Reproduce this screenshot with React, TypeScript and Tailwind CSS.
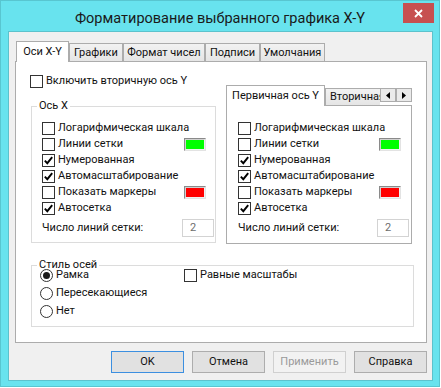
import React from 'react';

const FONT = { fontFamily: 'Roboto, "Noto Sans", sans-serif' };

function Box({ checked }: { checked?: boolean }) {
  return (
    <span className="w-[13px] h-[13px] shrink-0 border border-[#333333] bg-white flex items-center justify-center">
      {checked && (
        <svg width="11" height="11" viewBox="0 0 11 11">
          <path d="M1.8 5.6 L4.3 8.2 L9.2 2.2" fill="none" stroke="#000" strokeWidth="1.9" />
        </svg>
      )}
    </span>
  );
}

function Radio({ checked }: { checked?: boolean }) {
  return (
    <span className="w-[13px] h-[13px] shrink-0 rounded-full border border-[#333333] bg-white flex items-center justify-center">
      {checked && <span className="w-[7px] h-[7px] rounded-full bg-[#1a1a1a]" />}
    </span>
  );
}

function Swatch({ color }: { color: string }) {
  return (
    <span className="w-[22px] h-[13px] shrink-0 border border-t-[#8a8a8a] border-l-[#8a8a8a] border-r-[#e3e3e3] border-b-[#e3e3e3] flex">
      <span className="flex-1 border border-t-[#d0d0d0] border-l-[#d0d0d0] border-r-[#f0f0f0] border-b-[#f0f0f0]" style={{ background: color }} />
    </span>
  );
}

type Row = { label: string; checked?: boolean; swatch?: string };

const ROWS: Row[] = [
  { label: 'Логарифмическая шкала' },
  { label: 'Линии сетки', swatch: '#00ff00' },
  { label: 'Нумерованная', checked: true },
  { label: 'Автомасштабирование', checked: true },
  { label: 'Показать маркеры', swatch: '#ff0000' },
  { label: 'Автосетка', checked: true },
];

function AxisRows({ swatchGap, inputGap, pl }: { swatchGap: string; inputGap: string; pl: string }) {
  return (
    <div className={pl}>
      {ROWS.map(r => (
        <div key={r.label} className="h-[16px] flex items-center">
          <Box checked={r.checked} />
          <span className="ml-[3px] flex-1 whitespace-nowrap">{r.label}</span>
          {r.swatch && <span className={swatchGap}><Swatch color={r.swatch} /></span>}
        </div>
      ))}
      <div className="mt-[3px] h-[18px] flex items-center">
        <span className="flex-1 whitespace-nowrap">Число линий сетки:</span>
        <span className={`w-[32px] h-[18px] border border-[#d3d3d3] bg-white text-[#6d6d6d] pl-[7px] flex items-center ${inputGap}`}>2</span>
      </div>
    </div>
  );
}

export default function App() {
  const tabs = [
    { label: 'Графики', w: 'w-[54px]' },
    { label: 'Формат чисел', w: 'w-[82px]' },
    { label: 'Подписи', w: 'w-[55px]' },
    { label: 'Умолчания', w: 'w-[65px]' },
  ];

  return (
    <div className="w-[441px] h-[388px] bg-white text-[11px] text-[#111] leading-[16px]" style={FONT}>
      <div className="w-[440px] h-[387px] border border-[#58c6d0] bg-[#68e3ee] flex flex-col">
        {/* title bar */}
        <div className="relative h-[30px] shrink-0 flex justify-center pt-[8px]">
          <span className="text-[14.5px] leading-[20px] text-[#1a1a1a]">Форматирование выбранного графика X-Y</span>
          <div className="absolute right-[5px] top-[2px] w-[31px] h-[20px] bg-[#c75050] flex items-center justify-center">
            <svg width="9" height="9" viewBox="0 0 9 9">
              <path d="M1 1 L8 8 M8 1 L1 8" stroke="#fff" strokeWidth="1.8" />
            </svg>
          </div>
        </div>

        {/* client */}
        <div className="ml-[7px] w-[425px] h-[350px] shrink-0 border border-[#5cc2cc] bg-[#f0f0f0] pl-[6px] pr-[5px] pt-[9px]">
          <div className="flex items-end pl-[1px]">
            <div className="relative z-10 -mb-[1px] w-[53px] h-[21px] bg-white border border-b-0 border-[#acacac] flex items-center justify-center">
              Оси X-Y
            </div>
            {tabs.map(t => (
              <div key={t.label} className={`${t.w} h-[18px] border border-b-0 border-[#acacac] bg-gradient-to-b from-[#f2f2f2] to-[#e5e5e5] flex items-center justify-center whitespace-nowrap`}>
                {t.label}
              </div>
            ))}
          </div>

          <div className="h-[282px] border border-[#acacac] bg-white">
            <div className="flex">
              <div className="pl-[14px]">
                <div className="mt-[11px] h-[16px] flex items-center">
                  <Box />
                  <span className="ml-[3px]">Включить вторичную ось Y</span>
                </div>
                <fieldset className="ml-[1px] mt-[10px] w-[185px] border border-[#dcdcdc] pb-[5px]">
                  <legend className="ml-[5px] px-[2px] leading-[14px]">Ось X</legend>
                  <div className="mt-[7px]">
                    <AxisRows pl="pl-[10px]" swatchGap="mr-[9px]" inputGap="mr-[1px]" />
                  </div>
                </fieldset>
              </div>

              <div className="ml-[10px] mt-[23px] w-[186px]">
                <div className="flex items-end h-[20px]">
                  <div className="relative z-10 -mb-[1px] w-[99px] h-[21px] shrink-0 bg-white border border-b-0 border-[#acacac] flex items-center justify-center whitespace-nowrap">
                    Первичная ось Y
                  </div>
                  <div className="flex-1 overflow-hidden">
                    <div className="w-[74px] h-[17px] border border-b-0 border-[#acacac] bg-gradient-to-b from-[#f2f2f2] to-[#e5e5e5] pl-[4px] flex items-center whitespace-nowrap">
                      Вторичная ось Y
                    </div>
                  </div>
                  <div className="flex mb-[3px] shrink-0">
                    {['M4 0 L0 3.5 L4 7 Z', 'M0 0 L4 3.5 L0 7 Z'].map(d => (
                      <div key={d} className="w-[16px] h-[14px] border border-[#acacac] bg-[#eaeaea] flex items-center justify-center">
                        <svg width="4" height="7" viewBox="0 0 4 7">
                          <path d={d} fill="#000" />
                        </svg>
                      </div>
                    ))}
                  </div>
                </div>
                <div className="h-[139px] border border-[#acacac] bg-white pt-[14px]">
                  <AxisRows pl="pl-[11px]" swatchGap="mr-[10px]" inputGap="mr-[2px]" />
                </div>
              </div>
            </div>

            <fieldset className="ml-[15px] mt-[15px] w-[383px] border border-[#dcdcdc] pb-[6px]">
              <legend className="ml-[5px] px-[2px] leading-[12px]">Стиль осей</legend>
              <div className="-mt-[5px] pl-[8px] leading-[12px]">
                <div className="h-[18px] flex items-center">
                  <span className="w-[144px] flex items-center">
                    <Radio checked />
                    <span className="ml-[3px]">Рамка</span>
                  </span>
                  <Box />
                  <span className="ml-[3px]">Равные масштабы</span>
                </div>
                <div className="h-[18px] flex items-center">
                  <Radio />
                  <span className="ml-[3px]">Пересекающиеся</span>
                </div>
                <div className="h-[18px] flex items-center">
                  <Radio />
                  <span className="ml-[3px]">Нет</span>
                </div>
              </div>
            </fieldset>
          </div>

          <div className="mt-[8px] flex justify-end gap-[8px]">
            <div className="w-[73px] h-[22px] border border-[#3c8fe0] bg-[#e1e1e1] flex items-center justify-center">OK</div>
            <div className="w-[73px] h-[22px] border border-[#adadad] bg-[#e1e1e1] flex items-center justify-center">Отмена</div>
            <div className="w-[73px] h-[22px] border border-[#d0d0d0] bg-[#f2f2f2] text-[#9a9a9a] flex items-center justify-center">Применить</div>
            <div className="w-[73px] h-[22px] border border-[#adadad] bg-[#e1e1e1] flex items-center justify-center">Справка</div>
          </div>
        </div>
      </div>
    </div>
  );
}
